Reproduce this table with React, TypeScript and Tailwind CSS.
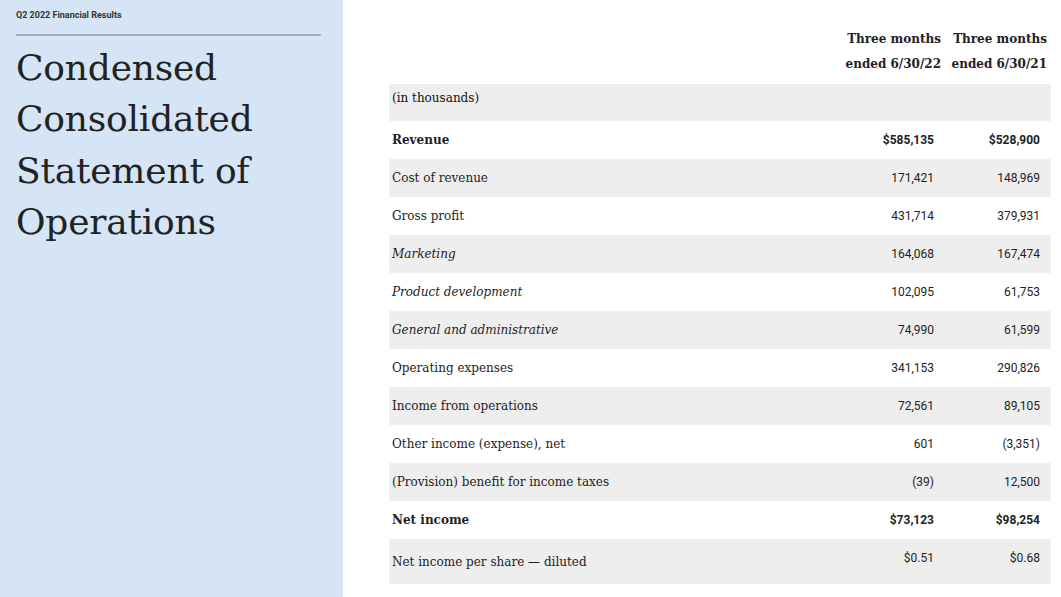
import React from "react";

type Row = {
  label: string;
  a: string;
  b: string;
  bold?: boolean;
  italic?: boolean;
  tall?: boolean;
};

const rows: Row[] = [
  { label: "Revenue", a: "$585,135", b: "$528,900", bold: true },
  { label: "Cost of revenue", a: "171,421", b: "148,969" },
  { label: "Gross profit", a: "431,714", b: "379,931" },
  { label: "Marketing", a: "164,068", b: "167,474", italic: true },
  { label: "Product development", a: "102,095", b: "61,753", italic: true },
  { label: "General and administrative", a: "74,990", b: "61,599", italic: true },
  { label: "Operating expenses", a: "341,153", b: "290,826" },
  { label: "Income from operations", a: "72,561", b: "89,105" },
  { label: "Other income (expense), net", a: "601", b: "(3,351)" },
  { label: "(Provision) benefit for income taxes", a: "(39)", b: "12,500" },
  { label: "Net income", a: "$73,123", b: "$98,254", bold: true },
  { label: "Net income per share — diluted", a: "$0.51", b: "$0.68", tall: true },
];

const serif = "font-['DejaVu_Serif',serif]";
const sans = "font-['Roboto','Liberation_Sans',sans-serif]";

export default function App() {
  return (
    <div className="flex h-[597px] w-[1061px] overflow-hidden bg-white text-[#222]">
      <aside className="w-[343px] shrink-0 bg-[#d5e5f5] px-4 pt-[9px]">
        <div className={`${sans} text-[9px] font-bold text-[#333]`}>Q2 2022 Financial Results</div>
        <div className="mt-[11px] h-[2px] w-[305px] bg-[#abb0b6]" />
        <h1 className={`${serif} mt-[6px] text-[36px] font-light leading-[51.5px] tracking-[-0.2px] text-[#222]`}>
          Condensed Consolidated Statement of Operations
        </h1>
      </aside>

      <main className="ml-[46px] mr-[10px] flex-1 pt-[27px]">
        <table className="w-full border-collapse">
          <thead>
            <tr className={`${serif} text-[12px] font-semibold leading-[25px]`}>
              <th />
              <th className="w-[112px] pb-[7px] pr-[4px] text-right font-semibold">
                Three months
                <br />
                ended 6/30/22
              </th>
              <th className="w-[106px] pb-[7px] pr-[4px] text-right font-semibold">
                Three months
                <br />
                ended 6/30/21
              </th>
            </tr>
          </thead>
          <tbody>
            <tr className="h-[37px] bg-[#eeeeee]">
              <td className={`${serif} pb-[10px] pl-[3px] text-[12px] font-medium text-[#111]`} colSpan={3}>
                (in thousands)
              </td>
            </tr>
            {rows.map((r, i) => (
              <tr
                key={r.label}
                className={`${r.tall ? "h-[45px]" : "h-[38px]"} ${i % 2 === 1 ? "bg-[#eeeeee]" : "bg-white"}`}
              >
                <td
                  className={`${serif} pl-[3px] text-[12px] ${r.bold ? "font-bold" : ""} ${r.italic ? "italic" : ""}`}
                >
                  {r.label}
                </td>
                <td className={`${sans} pr-[11px] text-right text-[12px] ${r.bold ? "font-bold" : ""} ${r.tall ? "pb-[8px]" : ""}`}>
                  {r.a}
                </td>
                <td className={`${sans} pr-[11px] text-right text-[12px] ${r.bold ? "font-bold" : ""} ${r.tall ? "pb-[8px]" : ""}`}>
                  {r.b}
                </td>
              </tr>
            ))}
          </tbody>
        </table>
      </main>
    </div>
  );
}
